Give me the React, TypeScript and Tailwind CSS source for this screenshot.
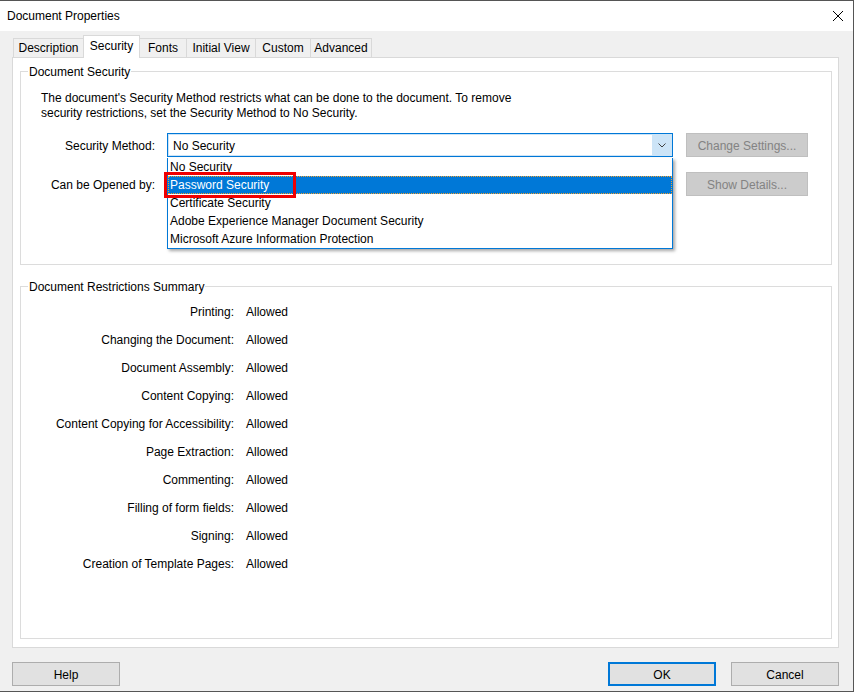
import React from "react"

const tabs = [
  { name: "Description", w: "w-[70px]" },
  { name: "Security", w: "w-[57px]", active: true },
  { name: "Fonts", w: "w-[46px]" },
  { name: "Initial View", w: "w-[69px]" },
  { name: "Custom", w: "w-[55px]" },
  { name: "Advanced", w: "w-[62px]" },
]

const methods = [
  "No Security",
  "Password Security",
  "Certificate Security",
  "Adobe Experience Manager Document Security",
  "Microsoft Azure Information Protection",
]

const restrictions = [
  "Printing:",
  "Changing the Document:",
  "Document Assembly:",
  "Content Copying:",
  "Content Copying for Accessibility:",
  "Page Extraction:",
  "Commenting:",
  "Filling of form fields:",
  "Signing:",
  "Creation of Template Pages:",
]

function GroupBox({ title, className, children }: { title: string; className: string; children: React.ReactNode }) {
  return (
    <div className={`relative border border-[#dcdcdc] ${className}`}>
      <span className="absolute -top-[7px] left-[7px] bg-white px-px leading-[15px]">{title}</span>
      {children}
    </div>
  )
}

function SecurityMethodCombo() {
  return (
    <div className="relative w-[506px] h-[24px] ml-[12px]">
      <div className="flex h-full border border-[#0078d7] bg-[#cce4f7] p-px">
        <div className="flex-1 bg-white pl-[4px] pt-[2px] flex items-center">No Security</div>
        <div className="w-[19px] flex items-center justify-center">
          <svg width="8" height="5" viewBox="0 0 8 5" fill="none">
            <path d="M0.5 0.5 L4 4 L7.5 0.5" stroke="#404040" strokeWidth="1" />
          </svg>
        </div>
      </div>

      {/* open drop-down list */}
      <div className="absolute top-[25px] left-0 w-full z-20 bg-white border-x border-b border-[#0078d7] shadow-[2px_2px_3px_rgba(0,0,0,0.35)]">
        {methods.map((m, i) => (
          <div
            key={m}
            className={`h-[18px] pl-[2px] flex items-center ${
              i === 1 ? "bg-[#0078d7] text-white outline-1 outline-dotted outline-[#f0a030] -outline-offset-1" : ""
            }`}
          >
            {m}
          </div>
        ))}
        <div className="absolute top-[14px] -left-[4px] w-[132px] h-[26px] border-[3px] border-[#f00000]" />
      </div>
    </div>
  )
}

function DisabledButton({ label }: { label: string }) {
  return (
    <div className="ml-[13px] w-[122px] h-[24px] pt-[2px] flex items-center justify-center bg-[#cccccc] border border-[#bfbfbf] text-[#838383]">
      {label}
    </div>
  )
}

export default function App() {
  return (
    <div
      className="w-[854px] h-[692px] flex flex-col bg-[#f0f0f0] border-t border-r border-b border-[#555555] text-[12px] leading-[15px] text-black"
      style={{ fontFamily: '"Liberation Sans", Arial, sans-serif' }}
    >
      {/* title bar */}
      <div className="h-[30px] shrink-0 bg-white flex items-center justify-between pl-[7px] pr-[10px]">
        <span>Document Properties</span>
        <svg width="10" height="10" viewBox="0 0 10 10">
          <path d="M0 0 L10 10 M10 0 L0 10" stroke="#000" strokeWidth="1" />
        </svg>
      </div>

      <div className="flex-1 flex flex-col pl-[12px] pr-[14px]">
        {/* tab strip */}
        <div className="h-[26px] flex items-end pl-px">
          {tabs.map((t, i) =>
            t.active ? (
              <div
                key={t.name}
                className={`${t.w} h-[23px] -mb-px relative z-10 bg-white border-x border-t border-[#d9d9d9] flex items-center justify-center pb-[2px]`}
              >
                {t.name}
              </div>
            ) : (
              <div
                key={t.name}
                className={`${t.w} h-[19px] pt-px bg-[#f0f0f0] border-t border-[#d9d9d9] flex items-center justify-center ${
                  i === tabs.length - 1 ? "border-r" : ""
                } ${i === 2 ? "" : "border-l"}`}
              >
                {t.name}
              </div>
            ),
          )}
        </div>

        {/* tab page */}
        <div className="h-[591px] bg-white border border-[#d9d9d9] pt-[13px] pl-[7px] pr-[6px]">
          <GroupBox title="Document Security" className="h-[194px]">
            <p className="pt-[19px] pl-[20px]">
              The document&apos;s Security Method restricts what can be done to the document. To remove
              <br />
              security restrictions, set the Security Method to No Security.
            </p>

            <div className="mt-[12px] flex items-center">
              <div className="w-[134px] pt-[2px] text-right">Security Method:</div>
              <SecurityMethodCombo />
              <DisabledButton label="Change Settings..." />
            </div>

            <div className="mt-[15px] flex items-center">
              <div className="w-[134px] pt-[2px] text-right">Can be Opened by:</div>
              <div className="w-[506px] ml-[12px]" />
              <DisabledButton label="Show Details..." />
            </div>
          </GroupBox>

          <GroupBox title="Document Restrictions Summary" className="mt-[21px] h-[353px] pt-[10px]">
            {restrictions.map((r) => (
              <div key={r} className="h-[28px] pt-[2px] flex items-center">
                <div className="w-[213px] text-right">{r}</div>
                <div className="ml-[12px]">Allowed</div>
              </div>
            ))}
          </GroupBox>
        </div>

        {/* dialog buttons */}
        <div className="mt-[14px] flex">
          <div className="w-[108px] h-[24px] pt-[2px] flex items-center justify-center bg-[#e1e1e1] border border-[#adadad]">Help</div>
          <div className="ml-auto w-[108px] h-[24px] pt-[2px] flex items-center justify-center bg-[#e1e1e1] border-2 border-[#0078d7]">OK</div>
          <div className="ml-[15px] w-[108px] h-[24px] pt-[2px] flex items-center justify-center bg-[#e1e1e1] border border-[#adadad]">Cancel</div>
        </div>
      </div>
    </div>
  )
}
